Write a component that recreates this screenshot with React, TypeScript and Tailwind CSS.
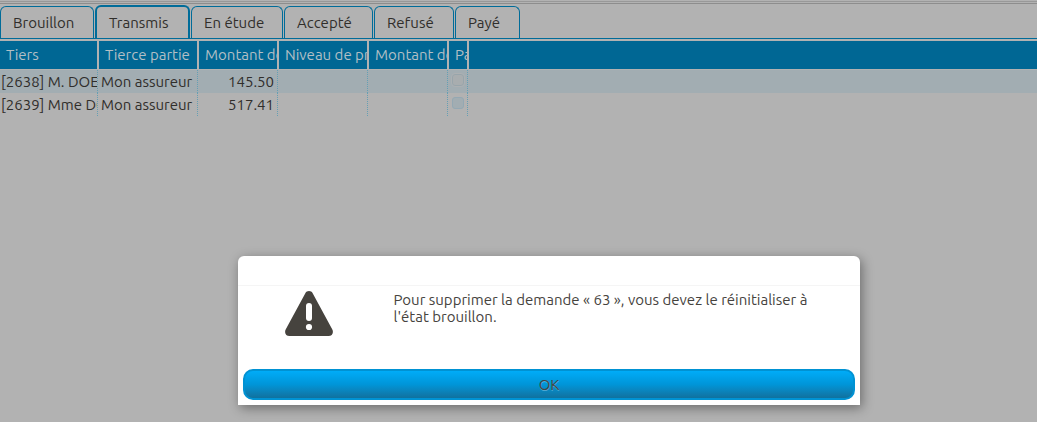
import React from "react";

const tabs = [
  { label: "Brouillon", width: "w-[94px]" },
  { label: "Transmis", width: "w-[95px]" },
  { label: "En étude", width: "w-[92px]" },
  { label: "Accepté", width: "w-[89px]" },
  { label: "Refusé", width: "w-[80px]" },
  { label: "Payé", width: "w-[65px]" },
];

const columns = [
  { label: "Tiers", width: "w-[99px]" },
  { label: "Tierce partie", width: "w-[100px]" },
  { label: "Montant de", width: "w-[80px]" },
  { label: "Niveau de pr", width: "w-[90px]" },
  { label: "Montant de", width: "w-[80px]" },
  { label: "Pa", width: "w-[20px]" },
];

const rows = [
  { tiers: "[2638] M. DOE", payer: "Mon assureur", amount: "145.50" },
  { tiers: "[2639] Mme DOE", payer: "Mon assureur", amount: "517.41" },
];

function Cell({ children, className = "" }: { children?: React.ReactNode; className?: string }) {
  return (
    <td className="p-0">
      <div
        className={`mr-px h-[23px] overflow-hidden border-r border-dotted border-[#659fb4] leading-6 whitespace-nowrap ${className}`}
      >
        {children}
      </div>
    </td>
  );
}

function Tabs() {
  return (
    <div role="tablist" className="flex items-end gap-px border-b border-[#006c99] pt-px">
      {tabs.map((tab, i) => (
        <button
          key={tab.label}
          type="button"
          role="tab"
          aria-selected={i === 1}
          className={`shrink-0 rounded-t-md border-[#006c99] pt-0.5 pl-3 text-left ${tab.width} ${
            i === 1 ? "h-[33px] border-x-2 border-t-2" : "h-8 border-x border-t"
          }`}
        >
          {tab.label}
        </button>
      ))}
    </div>
  );
}

function ClaimsTable() {
  return (
    <table className="mt-0.5 w-full table-fixed border-separate border-spacing-0">
      <colgroup>
        {columns.map((c, i) => (
          <col key={i} className={c.width} />
        ))}
        <col />
      </colgroup>
      <thead>
        <tr className="bg-[#006794] text-[#b2bfc5]">
          {columns.map((c, i) => (
            <th
              key={i}
              scope="col"
              className="h-[29px] overflow-hidden border-r-2 border-b border-[#b2b2b2] p-0 pl-1.5 text-left font-normal whitespace-nowrap"
            >
              {c.label}
            </th>
          ))}
          <td className="border-b border-[#b2b2b2] p-0" />
        </tr>
      </thead>
      <tbody>
        {rows.map((r, i) => (
          <tr key={r.tiers} className={i === 0 ? "bg-[#a2adb2]" : ""}>
            <Cell className="pl-px">{r.tiers}</Cell>
            <Cell className="pl-0.5">{r.payer}</Cell>
            <Cell className="pr-[3px] text-right">{r.amount}</Cell>
            <Cell />
            <Cell />
            <Cell className="pt-1 pl-[3px]">
              <input
                type="checkbox"
                disabled
                aria-label={`Payé ${r.tiers}`}
                className={`block size-3 appearance-none rounded-[3px] border ${
                  i === 0
                    ? "border-[#98a5ab] bg-[#a8adaf] outline-1 outline-[#acb0b2] outline-solid"
                    : "border-[#94a8b3] bg-[#a2adb2]"
                }`}
              />
            </Cell>
            <td className="p-0" />
          </tr>
        ))}
      </tbody>
    </table>
  );
}

function WarningIcon() {
  return (
    <svg viewBox="0 0 48 45" className="h-[45px] w-12" aria-hidden="true">
      <path
        d="M20.2 2.4C21.8-.8 26.2-.8 27.8 2.4L47.2 38.3C49 41.7 47.2 45 43.5 45H4.5C.8 45-1 41.7.8 38.3Z"
        fill="#46433e"
      />
      <rect x="21" y="12" width="6" height="18" rx="3" fill="white" />
      <circle cx="24" cy="36" r="3.1" fill="white" />
    </svg>
  );
}

function Alert() {
  return (
    <div
      role="alertdialog"
      aria-modal="true"
      aria-describedby="alert-message"
      className="absolute top-64 left-[22.95%] w-3/5 rounded-t-md bg-white text-[#46433e] shadow-[2px_3px_12px_rgba(0,0,0,0.4)]"
    >
      <div className="h-[30px] border-b border-[#f5f5f5]" />
      <div className="flex h-[83px] pt-[5px]">
        <div className="flex w-1/4 shrink-0 justify-center pr-3.5">
          <WarningIcon />
        </div>
        <p id="alert-message" className="w-[420px] leading-[17px]">
          Pour supprimer la demande « 63 », vous devez le réinitialiser à l'état brouillon.
        </p>
      </div>
      <div className="px-[5px] pb-[5px]">
        <button
          type="button"
          className="block h-[31px] w-full rounded-[10px] border-2 border-[#0092d3] bg-linear-to-b from-[#00acf8] via-[#0095d8] to-[#10719e] pt-0.5 text-shadow-[0_1px_0_rgba(255,255,255,0.3)]"
        >
          OK
        </button>
      </div>
    </div>
  );
}

export default function App() {
  return (
    <div className="relative min-h-screen overflow-hidden bg-[#b2b2b2] font-['Ubuntu','Noto_Sans',sans-serif] text-[15px] text-[#302e2b]">
      <main>
        <div className="h-1 border-b border-[#8d8d8d] pt-px">
          <div className="h-px bg-[#989898]" />
        </div>
        <Tabs />
        <ClaimsTable />
      </main>
      <Alert />
    </div>
  );
}
